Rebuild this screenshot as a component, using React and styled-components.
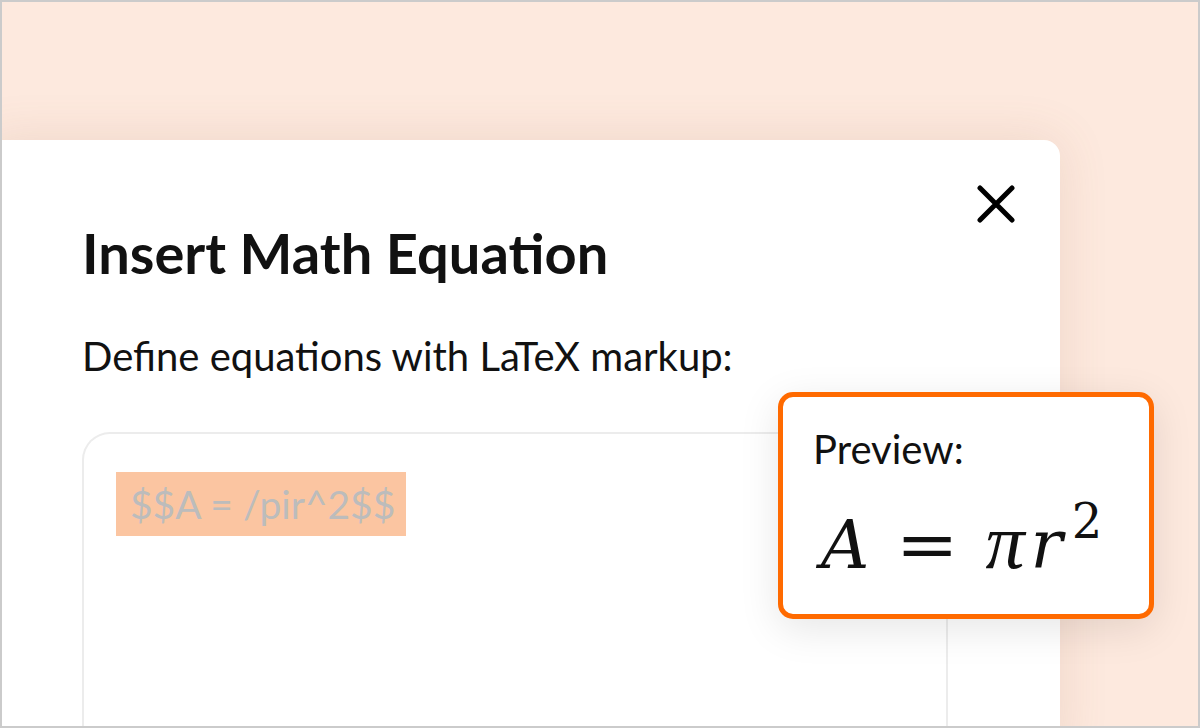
import styled, { createGlobalStyle } from "styled-components";

const Global = createGlobalStyle`
  html, body { margin: 0; padding: 0; }
  body { font-family: Lato, "Noto Sans", sans-serif; }
`;

const Frame = styled.div`
  position: relative;
  box-sizing: border-box;
  width: 1200px;
  height: 728px;
  border: 2px solid #cbcbcb;
  background: #fde9de;
  overflow: hidden;
  padding-top: 138px;
`;

const Dialog = styled.div`
  position: relative;
  box-sizing: border-box;
  width: 1078px;
  height: 620px;
  margin-left: -20px;
  background: #fff;
  border-radius: 16px;
  padding: 45px 45px 0 100px;
  box-shadow: 0 0 50px rgba(150, 100, 70, 0.14);
`;

const CloseRow = styled.div`
  display: flex;
  justify-content: flex-end;
`;

const CloseButton = styled.button`
  width: 38px;
  height: 38px;
  padding: 0;
  border: none;
  background: none;
  display: flex;
  align-items: center;
  justify-content: center;
  cursor: pointer;
`;

const Title = styled.h1`
  margin: 2px 0 0;
  font-family: Lato, sans-serif;
  font-weight: 700;
  font-size: 56px;
  line-height: 56px;
  color: #111;
`;

const Label = styled.p`
  margin: 55px 0 0;
  font-family: Lato, sans-serif;
  font-weight: 400;
  font-size: 40px;
  line-height: 40px;
  color: #111;
`;

const Editor = styled.div`
  box-sizing: border-box;
  width: 866px;
  height: 320px;
  margin-top: 56px;
  border: 2px solid #ececec;
  border-bottom: none;
  border-radius: 28px 28px 0 0;
  padding: 38px 32px;
`;

const Selected = styled.span`
  display: inline-block;
  background: #fbc5a1;
  color: #bcbcbc;
  font-family: Lato, sans-serif;
  font-size: 39px;
  line-height: 64px;
  padding: 0 11px 0 14px;
`;

const Preview = styled.div`
  position: absolute;
  left: 776px;
  top: 390px;
  box-sizing: border-box;
  width: 376px;
  height: 227px;
  background: #fff;
  border: 5px solid #ff6a00;
  border-radius: 15px;
  padding: 32px 0 0 30px;
  box-shadow: 0 10px 40px rgba(0, 0, 0, 0.1);
`;

const PreviewLabel = styled.div`
  font-family: Lato, sans-serif;
  font-size: 40px;
  line-height: 40px;
  color: #111;
`;

const Formula = styled.div`
  margin-top: 38px;
  margin-left: 8px;
  font-family: "DejaVu Serif", "Liberation Serif", serif;
  font-size: 67px;
  line-height: 70px;
  color: #111;
  white-space: nowrap;
`;

const Var = styled.i`
  font-style: italic;
  font-family: ${({ $serif }) => ($serif ? '"Liberation Serif", serif' : "inherit")};
  font-size: ${({ $serif }) => ($serif ? "78px" : "inherit")};
  margin-right: ${({ $gap }) => $gap || 0}px;
`;

const Op = styled.span`
  display: inline-block;
  transform: scaleX(1.12);
  margin: 0 ${({ $space }) => $space}px;
`;

const Sup = styled.sup`
  font-size: 48px;
  vertical-align: 30px;
  line-height: 0;
  margin-left: 9px;
`;

export default function App() {
  return (
    <>
      <Global />
      <Frame>
        <Dialog>
          <CloseRow>
            <CloseButton aria-label="Close">
              <svg width="38" height="38" viewBox="0 0 38 38">
                <path
                  d="M3 3 L35 35 M35 3 L3 35"
                  stroke="#000"
                  strokeWidth="5"
                  strokeLinecap="round"
                  fill="none"
                />
              </svg>
            </CloseButton>
          </CloseRow>
          <Title>Insert Math Equation</Title>
          <Label>Define equations with LaTeX markup:</Label>
          <Editor>
            <Selected>$$A = /pir^2$$</Selected>
          </Editor>
        </Dialog>
        <Preview>
          <PreviewLabel>Preview:</PreviewLabel>
          <Formula>
            <Var>A</Var>
            <Op $space={30}>=</Op>
            <Var $serif $gap={6}>π</Var>
            <Var>r</Var>
            <Sup>2</Sup>
          </Formula>
        </Preview>
      </Frame>
    </>
  );
}
